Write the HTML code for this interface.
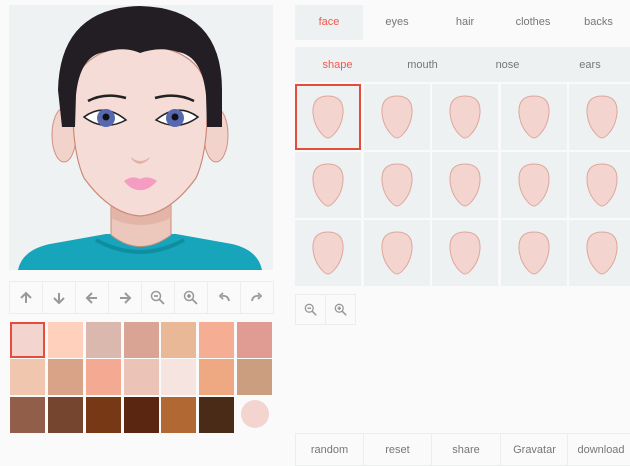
<!DOCTYPE html>
<html><head><meta charset="utf-8"><style>
*{margin:0;padding:0;box-sizing:border-box}
body{width:630px;height:464px;background:#fafafa;font-family:"Liberation Sans",sans-serif;position:relative;overflow:hidden;color:#777}
.abs{position:absolute}
.btn{position:absolute;border:1px solid #eceeee;background:#fafafa;display:flex;align-items:center;justify-content:center;font-size:11px;color:#777}
.sw{position:absolute;width:35px;height:36px}
.cell{position:absolute;width:66px;height:66px;background:#eef1f2;display:flex;align-items:center;justify-content:center}
</style></head><body>
<svg class="abs" style="left:9px;top:5px" width="264" height="265" viewBox="9 5 264 265">
<rect x="9" y="5" width="264" height="265" fill="#eef2f3"/>
<path d="M18 270 Q22 250 50 244 L106 234 L176 234 L232 244 Q258 250 262 270Z" fill="#17a5bb"/>
<path d="M96 240 Q140 264 184 240" fill="none" stroke="#0f8ea2" stroke-width="4"/>
<path d="M111 195 L111 235 Q140 258 171 235 L171 195Z" fill="#ecc7bb" stroke="#c98d7c" stroke-width="1"/>
<path d="M111 205 Q140 222 171 205 L171 218 Q140 232 111 218Z" fill="#e0ada0" opacity=".7"/>
<ellipse cx="64" cy="135" rx="12" ry="27" fill="#f1d3cc" stroke="#d28f80"/>
<ellipse cx="216" cy="135" rx="12" ry="27" fill="#f1d3cc" stroke="#d28f80"/>
<path d="M73 90 Q71 150 84 178 Q110 214 140 216 Q170 214 196 178 Q209 150 207 90 Q200 48 140 45 Q80 48 73 90Z" fill="#f5dcd7" stroke="#cc8a78" stroke-width="1.2"/>
<path d="M62 127 L75 127 L76 95 Q80 55 105 52 Q125 46 140 53 Q160 46 178 52 Q202 56 206 95 L207 127 L222 127 L222 90 Q222 8 140 6 Q60 8 58 90Z" fill="#231d24"/>
<path d="M88 101 Q105 92 126 98" fill="none" stroke="#222" stroke-width="2.5"/>
<path d="M155 98 Q176 92 194 101" fill="none" stroke="#222" stroke-width="2.5"/>
<path d="M84 117 Q104 102 126 120 Q104 132 84 117Z" fill="#fff" stroke="#222" stroke-width="1.5"/>
<path d="M156 120 Q178 102 198 117 Q178 132 156 120Z" fill="#fff" stroke="#222" stroke-width="1.5"/>
<circle cx="106" cy="118" r="9" fill="#5868b0"/><circle cx="106" cy="117" r="3.5" fill="#111"/>
<circle cx="175" cy="118" r="9" fill="#5868b0"/><circle cx="175" cy="117" r="3.5" fill="#111"/>
<path d="M131 157 Q140 165 150 157 Q148 162 140 164 Q132 162 131 157Z" fill="#e6b1a5"/>
<path d="M124 181 Q132 175 140 179 Q148 175 157 181 Q148 191 140 190 Q132 191 124 181Z" fill="#f59cc3"/>
</svg>
<div class="btn" style="left:9px;top:281px;width:34px;height:33px"><svg width="14" height="14" viewBox="0 0 14 14"><path d="M7 12V2M2 7l5-5 5 5" stroke="#999" stroke-width="2" fill="none"/></svg></div>
<div class="btn" style="left:42px;top:281px;width:34px;height:33px"><svg width="14" height="14" viewBox="0 0 14 14"><path d="M7 2v10M2 7l5 5 5-5" stroke="#999" stroke-width="2" fill="none"/></svg></div>
<div class="btn" style="left:75px;top:281px;width:34px;height:33px"><svg width="14" height="14" viewBox="0 0 14 14"><path d="M12 7H2M7 2L2 7l5 5" stroke="#999" stroke-width="2" fill="none"/></svg></div>
<div class="btn" style="left:108px;top:281px;width:34px;height:33px"><svg width="14" height="14" viewBox="0 0 14 14"><path d="M2 7h10M7 2l5 5-5 5" stroke="#999" stroke-width="2" fill="none"/></svg></div>
<div class="btn" style="left:141px;top:281px;width:34px;height:33px"><svg width="16" height="16" viewBox="0 0 16 16"><circle cx="6" cy="6" r="4.5" stroke="#999" stroke-width="1.5" fill="none"/><path d="M4 6h4M9.5 9.5l4.5 4.5" stroke="#999" stroke-width="1.8"/></svg></div>
<div class="btn" style="left:174px;top:281px;width:34px;height:33px"><svg width="16" height="16" viewBox="0 0 16 16"><circle cx="6" cy="6" r="4.5" stroke="#999" stroke-width="1.5" fill="none"/><path d="M4 6h4M6 4v4M9.5 9.5l4.5 4.5" stroke="#999" stroke-width="1.8"/></svg></div>
<div class="btn" style="left:207px;top:281px;width:34px;height:33px"><svg width="14" height="14" viewBox="0 0 14 14"><path d="M12 10Q11 4 5 5M6 2L3 5l3 3" stroke="#999" stroke-width="1.8" fill="none"/></svg></div>
<div class="btn" style="left:240px;top:281px;width:34px;height:33px"><svg width="14" height="14" viewBox="0 0 14 14"><path d="M2 10Q3 4 9 5M8 2l3 3-3 3" stroke="#999" stroke-width="1.8" fill="none"/></svg></div>
<div class="sw" style="left:10px;top:322px;background:#f3d4cf;border:2px solid #e64c3c"></div>
<div class="sw" style="left:48px;top:322px;background:#ffd0bc"></div>
<div class="sw" style="left:86px;top:322px;background:#dbb8ae"></div>
<div class="sw" style="left:124px;top:322px;background:#d9a493"></div>
<div class="sw" style="left:161px;top:322px;background:#e9b997"></div>
<div class="sw" style="left:199px;top:322px;background:#f5ae94"></div>
<div class="sw" style="left:237px;top:322px;background:#e09c92"></div>
<div class="sw" style="left:10px;top:359px;background:#f1c6af"></div>
<div class="sw" style="left:48px;top:359px;background:#d9a387"></div>
<div class="sw" style="left:86px;top:359px;background:#f3a992"></div>
<div class="sw" style="left:124px;top:359px;background:#ecc3b7"></div>
<div class="sw" style="left:161px;top:359px;background:#f6e4e1"></div>
<div class="sw" style="left:199px;top:359px;background:#eea982"></div>
<div class="sw" style="left:237px;top:359px;background:#cb9e80"></div>
<div class="sw" style="left:10px;top:397px;background:#915f49"></div>
<div class="sw" style="left:48px;top:397px;background:#754530"></div>
<div class="sw" style="left:86px;top:397px;background:#773816"></div>
<div class="sw" style="left:124px;top:397px;background:#5a2611"></div>
<div class="sw" style="left:161px;top:397px;background:#b26833"></div>
<div class="sw" style="left:199px;top:397px;background:#4a2b17"></div>
<div class="abs" style="left:241px;top:400px;width:28px;height:28px;border-radius:50%;background:#f3d4cf"></div>
<div class="abs" style="left:295px;top:5px;width:68px;height:35px;background:#eef1f2"></div>
<div class="abs" style="left:295px;top:5px;width:335px;height:35px;display:flex;font-size:11px;line-height:35px;text-align:center">
<div style="width:68px;color:#f0584c">face</div><div style="width:68px">eyes</div><div style="width:68px">hair</div><div style="width:68px">clothes</div><div style="width:63px">backs</div></div>
<div class="abs" style="left:295px;top:47px;width:335px;height:35px;background:#eef1f2;display:flex;font-size:11px;line-height:36px;text-align:center">
<div style="width:85px;color:#f0584c">shape</div><div style="width:85px">mouth</div><div style="width:85px">nose</div><div style="width:80px">ears</div></div>
<div id="grid"></div>
<script>
var g='';var xs=[295,364,432,501,569],ys=[84,152,220];
var face='<svg width="34" height="44" viewBox="0 0 34 44"><path d="M17 1Q33 1 32 18Q31 30 24 38Q20 43 17 43Q14 43 10 38Q3 30 2 18Q1 1 17 1Z" fill="#f3d4cf" stroke="#dca79c" stroke-width="1"/></svg>';
ys.forEach(function(y,r){xs.forEach(function(x,c){var sel=(r==0&&c==0)?'border:2px solid #e64c3c;':'';g+='<div class="cell" style="left:'+x+'px;top:'+y+'px;'+sel+'">'+face+'</div>';});});
document.getElementById('grid').innerHTML=g;
</script>
<div class="btn" style="left:295px;top:294px;width:31px;height:31px"><svg width="14" height="14" viewBox="0 0 16 16"><circle cx="6" cy="6" r="4.5" stroke="#999" stroke-width="1.5" fill="none"/><path d="M4 6h4M9.5 9.5l4.5 4.5" stroke="#999" stroke-width="1.8"/></svg></div>
<div class="btn" style="left:325px;top:294px;width:31px;height:31px"><svg width="14" height="14" viewBox="0 0 16 16"><circle cx="6" cy="6" r="4.5" stroke="#999" stroke-width="1.5" fill="none"/><path d="M4 6h4M6 4v4M9.5 9.5l4.5 4.5" stroke="#999" stroke-width="1.8"/></svg></div>
<div class="btn" style="left:295px;top:433px;width:69px;height:33px">random</div>
<div class="btn" style="left:363px;top:433px;width:69px;height:33px">reset</div>
<div class="btn" style="left:431px;top:433px;width:70px;height:33px">share</div>
<div class="btn" style="left:500px;top:433px;width:69px;height:33px">Gravatar</div>
<div class="btn" style="left:567px;top:433px;width:68px;height:33px">download</div>
</body></html>
